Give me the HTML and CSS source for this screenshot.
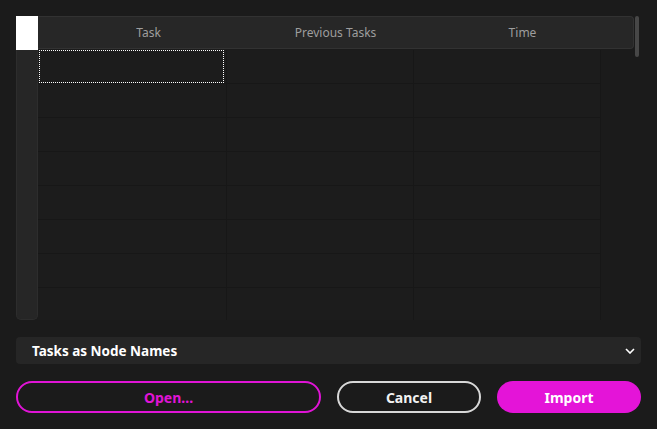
FILE: index.html
```html
<!DOCTYPE html>
<html>
<head>
<meta charset="utf-8">
<link rel="stylesheet" href="styles.css">
</head>
<body>
<div class="dialog">
  <div class="table">
    <div class="rowhead">
      <div class="corner"></div>
      <div class="rowhead-body"></div>
    </div>
    <div class="main">
      <div class="header">
        <div class="hcell">Task</div>
        <div class="hcell">Previous Tasks</div>
        <div class="hcell">Time</div>
      </div>
      <div class="body">
        <div class="row first"><div class="cell"><div class="focus"></div></div><div class="cell"></div><div class="cell"></div></div>
        <div class="row"><div class="cell"></div><div class="cell"></div><div class="cell"></div></div>
        <div class="row"><div class="cell"></div><div class="cell"></div><div class="cell"></div></div>
        <div class="row"><div class="cell"></div><div class="cell"></div><div class="cell"></div></div>
        <div class="row"><div class="cell"></div><div class="cell"></div><div class="cell"></div></div>
        <div class="row"><div class="cell"></div><div class="cell"></div><div class="cell"></div></div>
        <div class="row"><div class="cell"></div><div class="cell"></div><div class="cell"></div></div>
        <div class="row"><div class="cell"></div><div class="cell"></div><div class="cell"></div></div>
      </div>
    </div>
    <div class="scrollbar"></div>
  </div>
  <div class="select">
    <span class="select-label">Tasks as Node Names</span>
    <svg class="chevron" width="10" height="6" viewBox="0 0 10 6"><path d="M1 1 L5 5 L9 1" fill="none" stroke="#ffffff" stroke-width="1.6"/></svg>
  </div>
  <div class="buttons">
    <button class="btn btn-open">Open...</button>
    <button class="btn btn-cancel">Cancel</button>
    <button class="btn btn-import">Import</button>
  </div>
</div>
</body>
</html>
```

FILE: styles.css
```css
html, body {
  margin: 0;
  padding: 0;
  background: #1b1b1b;
}
body {
  font-family: "Noto Sans", "Open Sans", "Liberation Sans", sans-serif;
  width: 657px;
  height: 429px;
  overflow: hidden;
}
.dialog {
  padding: 16px 16px 0 16px;
  display: flex;
  flex-direction: column;
}
.table {
  display: flex;
  height: 304px;
}
.rowhead {
  width: 22px;
  display: flex;
  flex-direction: column;
}
.corner {
  height: 34px;
  background: #ffffff;
}
.rowhead-body {
  flex: 1;
  background: #262626;
  border: 1px solid #2d2d2d;
  border-top: none;
  border-radius: 0 0 5px 5px;
}
.main {
  width: 596px;
  display: flex;
  flex-direction: column;
}
.header {
  height: 33px;
  box-sizing: border-box;
  background: #272727;
  border: 1px solid #323232;
  border-left: none;
  border-radius: 0 4px 4px 0;
  display: flex;
  padding-left: 17px;
  align-items: center;
}
.hcell {
  width: 187px;
  text-align: center;
  color: #9e9e9e;
  font-size: 12px;
}
.body {
  flex: 1;
  overflow: hidden;
  padding-top: 1px;
}
.row {
  display: grid;
  grid-template-columns: 189px 187px 187px;
  height: 34px;
}
.cell {
  border-right: 1px solid #171717;
  border-bottom: 1px solid #171717;
  background: #1c1c1c;
}
.focus {
  margin-left: 1px;
  width: 183px;
  height: 31px;
  border: 1px dotted #ffffff;
}
.scrollbar {
  width: 4px;
  height: 41px;
  margin-left: 1px;
  background: #474747;
  border-radius: 2px;
}
.select {
  margin-top: 17px;
  height: 27px;
  background: #262626;
  border-radius: 4px;
  display: flex;
  align-items: center;
  justify-content: space-between;
  padding: 0 6px 0 16px;
}
.select-label {
  color: #ffffff;
  font-weight: 700;
  font-size: 13.5px;
}
.chevron {
  display: block;
}
.buttons {
  margin-top: 17px;
  display: flex;
  gap: 16px;
}
.btn {
  height: 32px;
  border-radius: 16px;
  font-family: "Noto Sans", "Open Sans", "Liberation Sans", sans-serif;
  font-weight: 700;
  font-size: 14px;
  background: transparent;
  padding: 0;
  box-sizing: border-box;
}
.btn-open {
  flex: 1;
  border: 2px solid #e014d6;
  color: #e014d6;
}
.btn-cancel {
  width: 144px;
  border: 2px solid #d8d8d8;
  color: #f2f2f2;
}
.btn-import {
  width: 144px;
  border: none;
  background: #e414d8;
  color: #ffffff;
}
```
